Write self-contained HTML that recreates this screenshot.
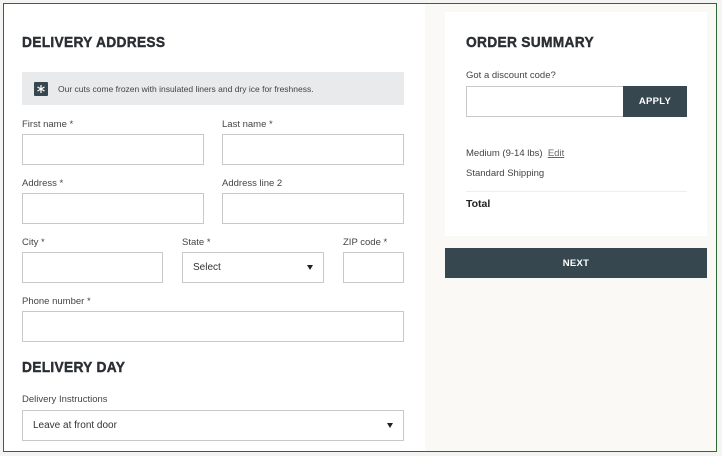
<!DOCTYPE html>
<html><head><meta charset="utf-8"><style>
*{box-sizing:border-box;margin:0;padding:0}
body{width:722px;height:456px;background:#f4f4f2;font-family:"Liberation Sans",sans-serif;color:#333;position:relative;overflow:hidden}
.frame{position:absolute;left:3px;top:3px;width:714px;height:449px;border:1px solid #2e6b34;background:#faf9f5;overflow:hidden}
.left{position:absolute;left:0;top:0;width:421px;height:449px;background:#fff}
.a{position:absolute}
h2{position:absolute;font-family:"Liberation Sans",sans-serif;font-weight:900;font-size:14.5px;letter-spacing:0.3px;color:#2b2f33;transform:scaleX(0.95);transform-origin:left;-webkit-text-stroke:0.4px #2b2f33}
.lbl{position:absolute;font-size:9.5px;color:#444}
.in{position:absolute;border:1px solid #c9c9c9;background:#fff}
.sel{font-size:10px;color:#333;padding:0 10px;display:flex;align-items:center;justify-content:space-between}
.sel i{width:0;height:0;border-left:3.5px solid transparent;border-right:3.5px solid transparent;border-top:5px solid #222;font-style:normal}
.card{position:absolute;left:441px;top:8px;width:262px;height:224px;background:#fff}
.btn{background:#37474f;color:#fff;font-weight:900;font-size:9.5px;display:flex;align-items:center;justify-content:center;letter-spacing:0.3px}
.t{position:absolute;font-size:9.5px;color:#444}
</style></head><body>
<div class="frame">
<div class="left">
<h2 style="left:18px;top:31px">DELIVERY ADDRESS</h2>
<div class="a" style="left:18px;top:68px;width:382px;height:33px;background:#e9eaeb"></div>
<svg class="a" style="left:30px;top:78px" width="14" height="14" viewBox="0 0 14 14"><rect width="14" height="14" rx="1" fill="#37474f"/><g stroke="#fff" stroke-width="1.2"><path d="M7 3v8M3.5 5l7 4M3.5 9l7-4"/></g></svg>
<div class="t" style="left:54px;top:80px;font-size:8.5px;color:#444">Our cuts come frozen with insulated liners and dry ice for freshness.</div>
<div class="lbl" style="left:18px;top:115px">First name *</div>
<div class="lbl" style="left:218px;top:115px">Last name *</div>
<div class="in" style="left:18px;top:130px;width:182px;height:31px"></div>
<div class="in" style="left:218px;top:130px;width:182px;height:31px"></div>
<div class="lbl" style="left:18px;top:174px">Address *</div>
<div class="lbl" style="left:218px;top:174px">Address line 2</div>
<div class="in" style="left:18px;top:189px;width:182px;height:31px"></div>
<div class="in" style="left:218px;top:189px;width:182px;height:31px"></div>
<div class="lbl" style="left:18px;top:233px">City *</div>
<div class="lbl" style="left:178px;top:233px">State *</div>
<div class="lbl" style="left:339px;top:233px">ZIP code *</div>
<div class="in" style="left:18px;top:248px;width:141px;height:31px"></div>
<div class="in sel" style="left:178px;top:248px;width:142px;height:31px"><span>Select</span><i></i></div>
<div class="in" style="left:339px;top:248px;width:61px;height:31px"></div>
<div class="lbl" style="left:18px;top:292px">Phone number *</div>
<div class="in" style="left:18px;top:307px;width:382px;height:31px"></div>
<h2 style="left:18px;top:356px">DELIVERY DAY</h2>
<div class="lbl" style="left:18px;top:390px">Delivery Instructions</div>
<div class="in sel" style="left:18px;top:406px;width:382px;height:31px"><span>Leave at front door</span><i></i></div>
</div>
<div class="card">
<h2 style="left:21px;top:23px">ORDER SUMMARY</h2>
<div class="t" style="left:21px;top:58px">Got a discount code?</div>
<div class="in" style="left:21px;top:74px;width:158px;height:31px"></div>
<div class="a btn" style="left:178px;top:74px;width:64px;height:31px">APPLY</div>
<div class="t" style="left:21px;top:136px">Medium (9-14 lbs) &nbsp;<span style="text-decoration:underline;color:#666">Edit</span></div>
<div class="t" style="left:21px;top:156px">Standard Shipping</div>
<div class="a" style="left:21px;top:179px;width:221px;height:1px;background:#eee"></div>
<div class="t" style="left:21px;top:186px;font-weight:bold;color:#222;font-size:10.5px">Total</div>
</div>
<div class="a btn" style="left:441px;top:244px;width:262px;height:30px">NEXT</div>
</div>
</body></html>
